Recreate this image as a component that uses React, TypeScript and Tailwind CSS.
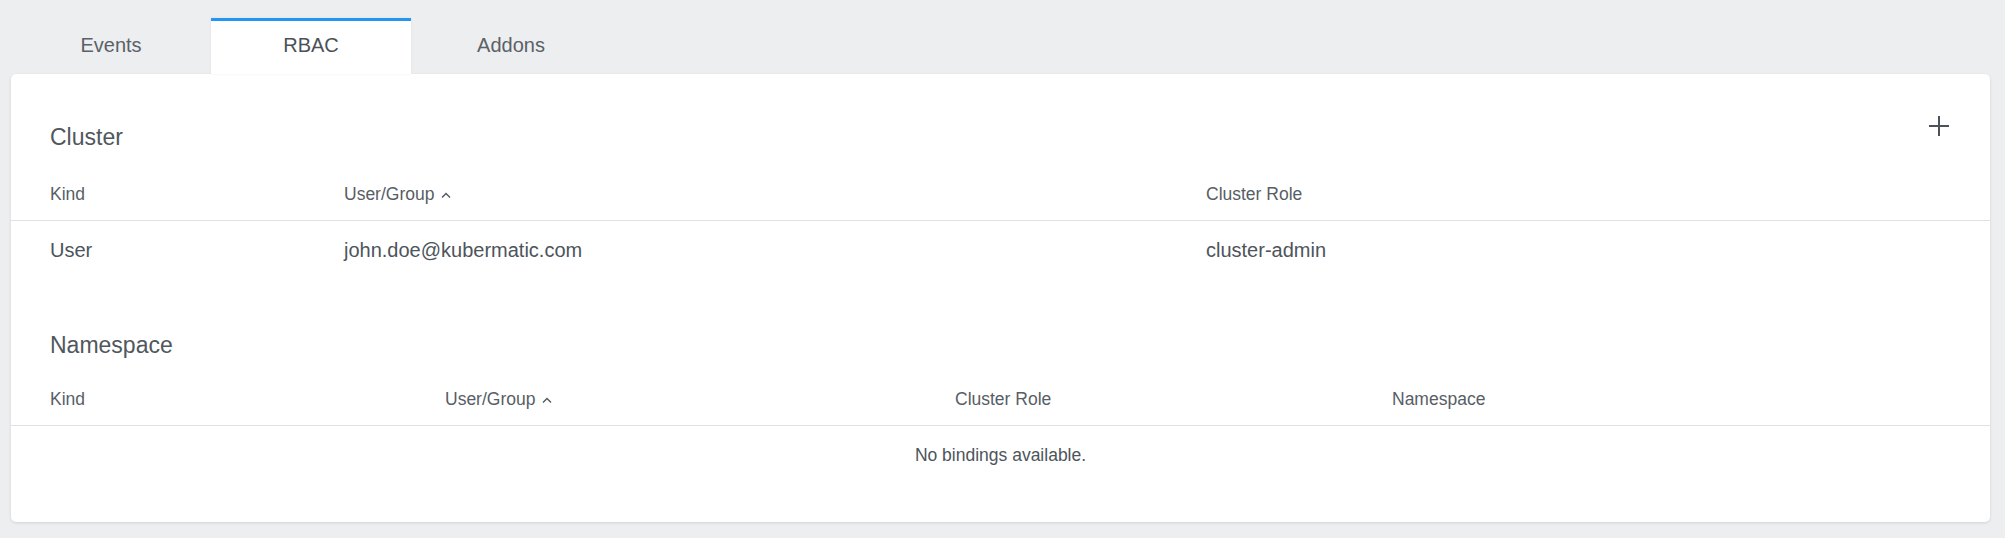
const tabs = ["Events", "RBAC", "Addons"]

function SortArrow() {
    return (
        <svg width="12" height="8" viewBox="0 0 12 8" className="ml-[6px] text-[#50575e]" fill="none">
            <path d="M2 6.5 L6 2.5 L10 6.5" stroke="currentColor" strokeWidth="1.4" />
        </svg>
    )
}

function PlusIcon() {
    return (
        <svg width="20" height="20" viewBox="0 0 20 20" className="text-[#4b5259]">
            <path d="M10 0 V20 M0 10 H20" stroke="currentColor" strokeWidth="2" />
        </svg>
    )
}

export default function App() {
    const active = "RBAC"

    return (
        <div className="h-[538px] w-[2005px] bg-[#edeef0] pl-[11px] pr-[15px] pt-[18px] text-[#4d545b] font-['Liberation_Sans',Arial,sans-serif]">
            {/* Tabs */}
            <div className="flex h-[56px]">
                {tabs.map((t) => (
                    <div
                        key={t}
                        className={
                            t === active
                                ? "w-[200px] bg-white border-t-[3px] border-[#2196f3] flex items-center justify-center pb-[6px] text-[20px] text-[#4a5158] shadow-[0_0_3px_rgba(0,0,0,0.06)]"
                                : "w-[200px] flex items-center justify-center pb-[3px] text-[20px] text-[#5a6168]"
                        }
                    >
                        {t}
                    </div>
                ))}
            </div>

            {/* Card */}
            <div className="bg-white rounded-[5px] shadow-[0_1px_3px_rgba(0,0,0,0.12)] pb-[38px]">
                {/* Cluster */}
                <div className="flex justify-between pl-[39px] pr-[41px]">
                    <h2 className="pt-[49px] pb-[18px] text-[23px] leading-[28px] text-[#50575e]">Cluster</h2>
                    <div className="mt-[42px]">
                        <PlusIcon />
                    </div>
                </div>
                <div className="grid grid-cols-[294px_862px_1fr] pl-[39px] h-[52px] items-center border-b border-[#dfe1e4] text-[17.5px] text-[#575e65]">
                    <div>Kind</div>
                    <div className="flex items-center">User/Group<SortArrow /></div>
                    <div>Cluster Role</div>
                </div>
                <div className="grid grid-cols-[294px_862px_1fr] pl-[39px] h-[58px] items-center text-[20px] text-[#4d545b]">
                    <div>User</div>
                    <div>john.doe@kubermatic.com</div>
                    <div>cluster-admin</div>
                </div>

                {/* Namespace */}
                <h2 className="pl-[39px] pt-[52px] pb-[15px] text-[23px] leading-[28px] text-[#50575e]">Namespace</h2>
                <div className="grid grid-cols-[395px_510px_437px_1fr] pl-[39px] h-[52px] items-center border-b border-[#dfe1e4] text-[17.5px] text-[#575e65]">
                    <div>Kind</div>
                    <div className="flex items-center">User/Group<SortArrow /></div>
                    <div>Cluster Role</div>
                    <div>Namespace</div>
                </div>
                <div className="h-[58px] flex items-center justify-center text-[17.5px] text-[#4d545b]">
                    No bindings available.
                </div>
            </div>
        </div>
    )
}
